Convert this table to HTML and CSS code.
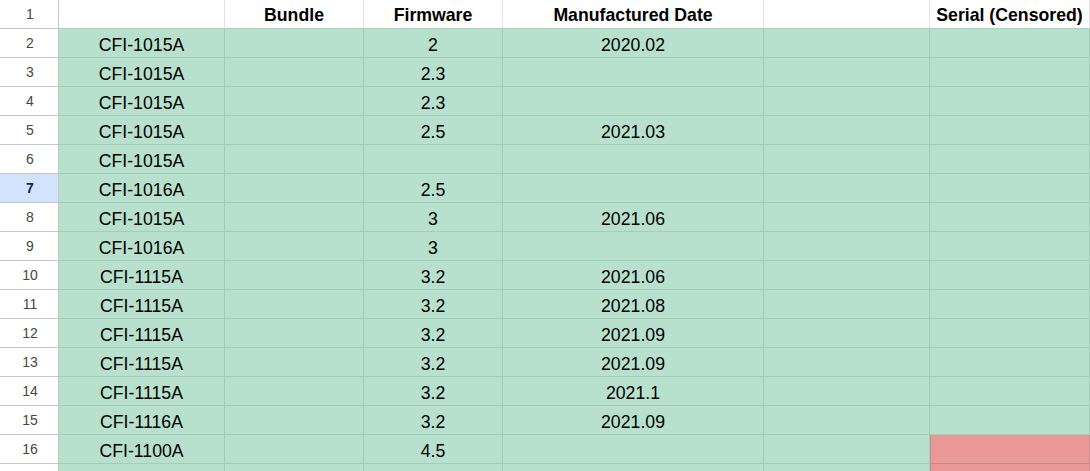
FILE: index.html
```html
<!DOCTYPE html>
<html>
<head>
<meta charset="utf-8">
<link rel="stylesheet" href="styles.css">
</head>
<body>
<div class="sheet">
  <div class="rh">1</div><div class="c h"></div><div class="c h">Bundle</div><div class="c h">Firmware</div><div class="c h">Manufactured Date</div><div class="c h"></div><div class="c h">Serial (Censored)</div>

  <div class="rh">2</div><div class="c g">CFI-1015A</div><div class="c g"></div><div class="c g">2</div><div class="c g">2020.02</div><div class="c g"></div><div class="c g"></div>
  <div class="rh">3</div><div class="c g">CFI-1015A</div><div class="c g"></div><div class="c g">2.3</div><div class="c g"></div><div class="c g"></div><div class="c g"></div>
  <div class="rh">4</div><div class="c g">CFI-1015A</div><div class="c g"></div><div class="c g">2.3</div><div class="c g"></div><div class="c g"></div><div class="c g"></div>
  <div class="rh">5</div><div class="c g">CFI-1015A</div><div class="c g"></div><div class="c g">2.5</div><div class="c g">2021.03</div><div class="c g"></div><div class="c g"></div>
  <div class="rh">6</div><div class="c g">CFI-1015A</div><div class="c g"></div><div class="c g"></div><div class="c g"></div><div class="c g"></div><div class="c g"></div>
  <div class="rh sel">7</div><div class="c g">CFI-1016A</div><div class="c g"></div><div class="c g">2.5</div><div class="c g"></div><div class="c g"></div><div class="c g"></div>
  <div class="rh">8</div><div class="c g">CFI-1015A</div><div class="c g"></div><div class="c g">3</div><div class="c g">2021.06</div><div class="c g"></div><div class="c g"></div>
  <div class="rh">9</div><div class="c g">CFI-1016A</div><div class="c g"></div><div class="c g">3</div><div class="c g"></div><div class="c g"></div><div class="c g"></div>
  <div class="rh">10</div><div class="c g">CFI-1115A</div><div class="c g"></div><div class="c g">3.2</div><div class="c g">2021.06</div><div class="c g"></div><div class="c g"></div>
  <div class="rh">11</div><div class="c g">CFI-1115A</div><div class="c g"></div><div class="c g">3.2</div><div class="c g">2021.08</div><div class="c g"></div><div class="c g"></div>
  <div class="rh">12</div><div class="c g">CFI-1115A</div><div class="c g"></div><div class="c g">3.2</div><div class="c g">2021.09</div><div class="c g"></div><div class="c g"></div>
  <div class="rh">13</div><div class="c g">CFI-1115A</div><div class="c g"></div><div class="c g">3.2</div><div class="c g">2021.09</div><div class="c g"></div><div class="c g"></div>
  <div class="rh">14</div><div class="c g">CFI-1115A</div><div class="c g"></div><div class="c g">3.2</div><div class="c g">2021.1</div><div class="c g"></div><div class="c g"></div>
  <div class="rh">15</div><div class="c g">CFI-1116A</div><div class="c g"></div><div class="c g">3.2</div><div class="c g">2021.09</div><div class="c g"></div><div class="c g"></div>
  <div class="rh">16</div><div class="c g">CFI-1100A</div><div class="c g"></div><div class="c g">4.5</div><div class="c g"></div><div class="c g"></div><div class="c r"></div>
  <div class="rh"></div><div class="c g"></div><div class="c g"></div><div class="c g"></div><div class="c g"></div><div class="c g"></div><div class="c r"></div>
</div>
</body>
</html>
```

FILE: styles.css
```css
html, body {
  margin: 0;
  padding: 0;
  background: #ffffff;
  overflow: hidden;
}

.sheet {
  display: grid;
  grid-template-columns: 59px 166px 139px 139px 261px 166px 1fr;
  grid-auto-rows: 29px;
  width: 1090px;
  font-family: "Liberation Sans", Arial, sans-serif;
}

.rh {
  box-sizing: border-box;
  border-right: 1px solid #c4c7c5;
  border-bottom: 1px solid #c4c7c5;
  background: #ffffff;
  color: #444746;
  font-size: 14px;
  line-height: 28px;
  text-align: center;
  padding-left: 2px;
}

.rh.sel {
  background: #d3e3fd;
  color: #0b2a5c;
  font-weight: bold;
}

.c {
  box-sizing: border-box;
  border-right: 1px solid #e1e1e1;
  border-bottom: 1px solid #e1e1e1;
  font-size: 17.7px;
  color: #000000;
  text-align: center;
  padding-top: 5px;
  line-height: 23px;
  white-space: nowrap;
  overflow: hidden;
}

.c.h {
  font-weight: bold;
  padding-top: 4px;
  border-bottom-color: #a9d2bf;
}

.c.g {
  background: #b7e1cd;
  border-right-color: #a3ccb9;
  border-bottom-color: #a3ccb9;
}

.c.r {
  background: #ea9999;
  border-right-color: #d18a8a;
  border-bottom-color: #cc8787;
  box-shadow: inset 1px 0 0 #d08c8c;
}
```
